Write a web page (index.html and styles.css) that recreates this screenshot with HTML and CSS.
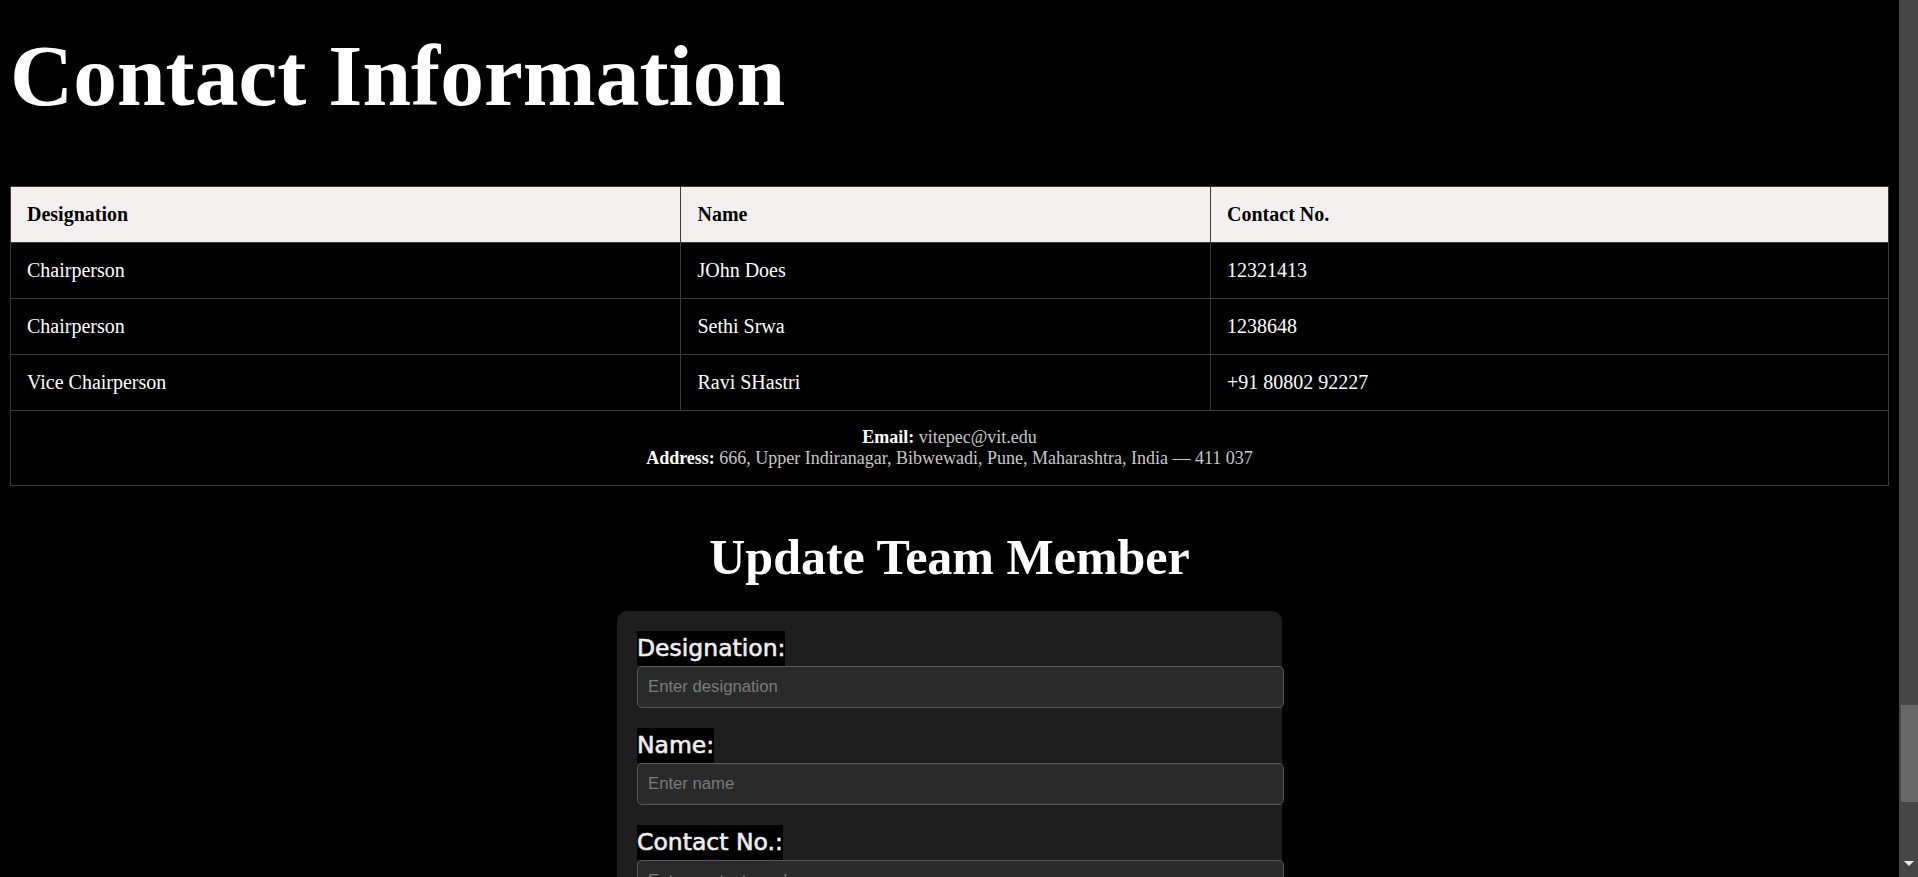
FILE: index.html
```html
<!DOCTYPE html>
<html lang="en">
<head>
<meta charset="utf-8">
<title>Contact Information</title>
<link rel="stylesheet" href="styles.css">
</head>
<body>
<div class="page">
  <h1 class="page-title">Contact Information</h1>

  <table class="contact-table">
    <thead>
      <tr>
        <th class="col-desig">Designation</th>
        <th class="col-name">Name</th>
        <th class="col-contact">Contact No.</th>
      </tr>
    </thead>
    <tbody>
      <tr>
        <td>Chairperson</td>
        <td>JOhn Does</td>
        <td>12321413</td>
      </tr>
      <tr>
        <td>Chairperson</td>
        <td>Sethi Srwa</td>
        <td>1238648</td>
      </tr>
      <tr>
        <td>Vice Chairperson</td>
        <td>Ravi SHastri</td>
        <td>+91 80802 92227</td>
      </tr>
      <tr>
        <td class="info-cell" colspan="3">
          <strong>Email:</strong> <span class="info-value">vitepec@vit.edu</span><br>
          <strong>Address:</strong> <span class="info-value">666, Upper Indiranagar, Bibwewadi, Pune, Maharashtra, India — 411 037</span>
        </td>
      </tr>
    </tbody>
  </table>

  <h2 class="section-title">Update Team Member</h2>

  <form class="member-form">
    <div class="field">
      <label class="field-label" for="designation">Designation:</label>
      <input class="field-input" id="designation" type="text" placeholder="Enter designation">
    </div>
    <div class="field">
      <label class="field-label" for="name">Name:</label>
      <input class="field-input" id="name" type="text" placeholder="Enter name">
    </div>
    <div class="field">
      <label class="field-label" for="contact">Contact No.:</label>
      <input class="field-input" id="contact" type="text" placeholder="Enter contact number">
    </div>
    <button class="submit-btn" type="submit">Update Member</button>
  </form>
</div>

<div class="scroll-rail" aria-hidden="true">
  <div class="scroll-thumb"></div>
  <div class="scroll-arrow"></div>
</div>
</body>
</html>
```
FILE: styles.css
```css
html, body {
  margin: 0;
  padding: 0;
  background: #000;
  color: #fff;
  font-family: "Liberation Serif", "Times New Roman", serif;
}

.page {
  padding: 0 29px 40px 10px;
}

.page-title {
  margin: 26px 0 60px 0;
  font-size: 87.5px;
  line-height: 100px;
  font-weight: bold;
}

.contact-table {
  width: 100%;
  border-collapse: collapse;
  font-size: 20px;
  border: 1px solid #3a3a3a;
}

.contact-table th,
.contact-table td {
  border: 1px solid #3a3a3a;
  padding: 16px;
  text-align: left;
}

.contact-table th {
  background: #f4f0ef;
  color: #000;
  font-weight: bold;
}

.col-desig { width: 35.7%; }
.col-name { width: 28.2%; }

.contact-table td.info-cell {
  text-align: center;
  font-size: 18px;
}

.info-value {
  color: #c8c8c8;
}

.section-title {
  margin: 42px 0 25px 0;
  font-size: 50px;
  text-align: center;
  font-weight: bold;
}

.member-form {
  width: 625px;
  margin: 0 auto;
  padding: 20px;
  background: #1e1e1e;
  border-radius: 10px;
}

.field {
  margin-bottom: 20px;
}

.field-label {
  display: inline-block;
  background: #000;
  color: #eee;
  font-family: "Comic Sans MS", "DejaVu Sans", sans-serif;
  font-size: 23.5px;
  line-height: 35px;
  -webkit-text-stroke: 0.6px #eee;
}

.field-input {
  display: block;
  width: 100%;
  margin: 0;
  padding: 10px;
  background: #2a2a2a;
  border: 1px solid #585858;
  border-radius: 5px;
  color: #eee;
  font-family: "Liberation Sans", Arial, sans-serif;
  font-size: 16.7px;
}

.field-input::placeholder {
  color: #7c7c7c;
}

.submit-btn {
  padding: 10px 20px;
  background: #3a3a3a;
  color: #fff;
  border: 1px solid #585858;
  border-radius: 5px;
  font-family: "Liberation Sans", Arial, sans-serif;
  font-size: 16px;
}

/* visual stand-in for the classic browser scrollbar seen in the reference */
.scroll-rail {
  position: fixed;
  top: 0;
  right: 0;
  width: 19px;
  height: 100vh;
  background: #464646;
}

.scroll-thumb {
  position: absolute;
  top: 705px;
  left: 2px;
  right: 0;
  height: 97px;
  background: #686868;
}

.scroll-arrow {
  position: absolute;
  bottom: 11px;
  left: 5px;
  width: 0;
  height: 0;
  border-left: 5px solid transparent;
  border-right: 5px solid transparent;
  border-top: 5px solid #e8e8e8;
}
```
